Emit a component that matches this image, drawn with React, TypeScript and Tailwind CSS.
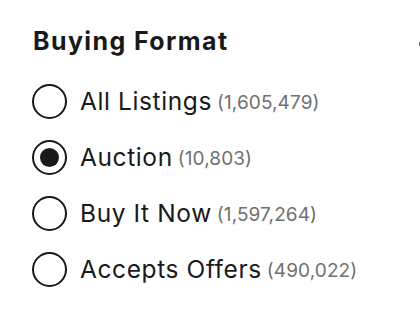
import React, { useState } from 'react';

const options = [
  { label: 'All Listings', count: '(1,605,479)' },
  { label: 'Auction', count: '(10,803)' },
  { label: 'Buy It Now', count: '(1,597,264)' },
  { label: 'Accepts Offers', count: '(490,022)' },
];

export default function App() {
  const [selected, setSelected] = useState(1);

  return (
    <div className="w-[420px] h-[326px] overflow-hidden bg-white text-[#191919]" style={{ fontFamily: 'Inter, "Noto Sans", sans-serif' }}>
      <div className="flex items-center pl-[33px] pt-[25px]">
        <h2 className="text-[25px] leading-[32px] font-bold tracking-[1.4px]">Buying Format</h2>
        {/* edge of the collapse chevron, cut off by the viewport */}
        <div className="ml-auto w-[1px] h-[4px] mt-[6px] bg-[#707070]"></div>
      </div>

      <ul className="flex flex-col pl-[32px] pt-[16px]">
        {options.map((opt, i) => (
          <li key={opt.label}>
            <label className="flex items-center h-[56px] cursor-pointer" onClick={() => setSelected(i)}>
              <span className="w-[35px] h-[35px] rounded-full border-2 border-[#191919] flex items-center justify-center shrink-0">
                {selected === i && <span className="w-[19px] h-[19px] rounded-full bg-[#191919]"></span>}
              </span>
              <span className="ml-[13px] text-[24.5px] leading-[30px] tracking-[0.6px]">{opt.label}</span>
              <span className="ml-[5px] text-[19px] leading-[30px] mt-[3px] tracking-[0.1px] text-[#707070]">{opt.count}</span>
            </label>
          </li>
        ))}
      </ul>
    </div>
  );
}
